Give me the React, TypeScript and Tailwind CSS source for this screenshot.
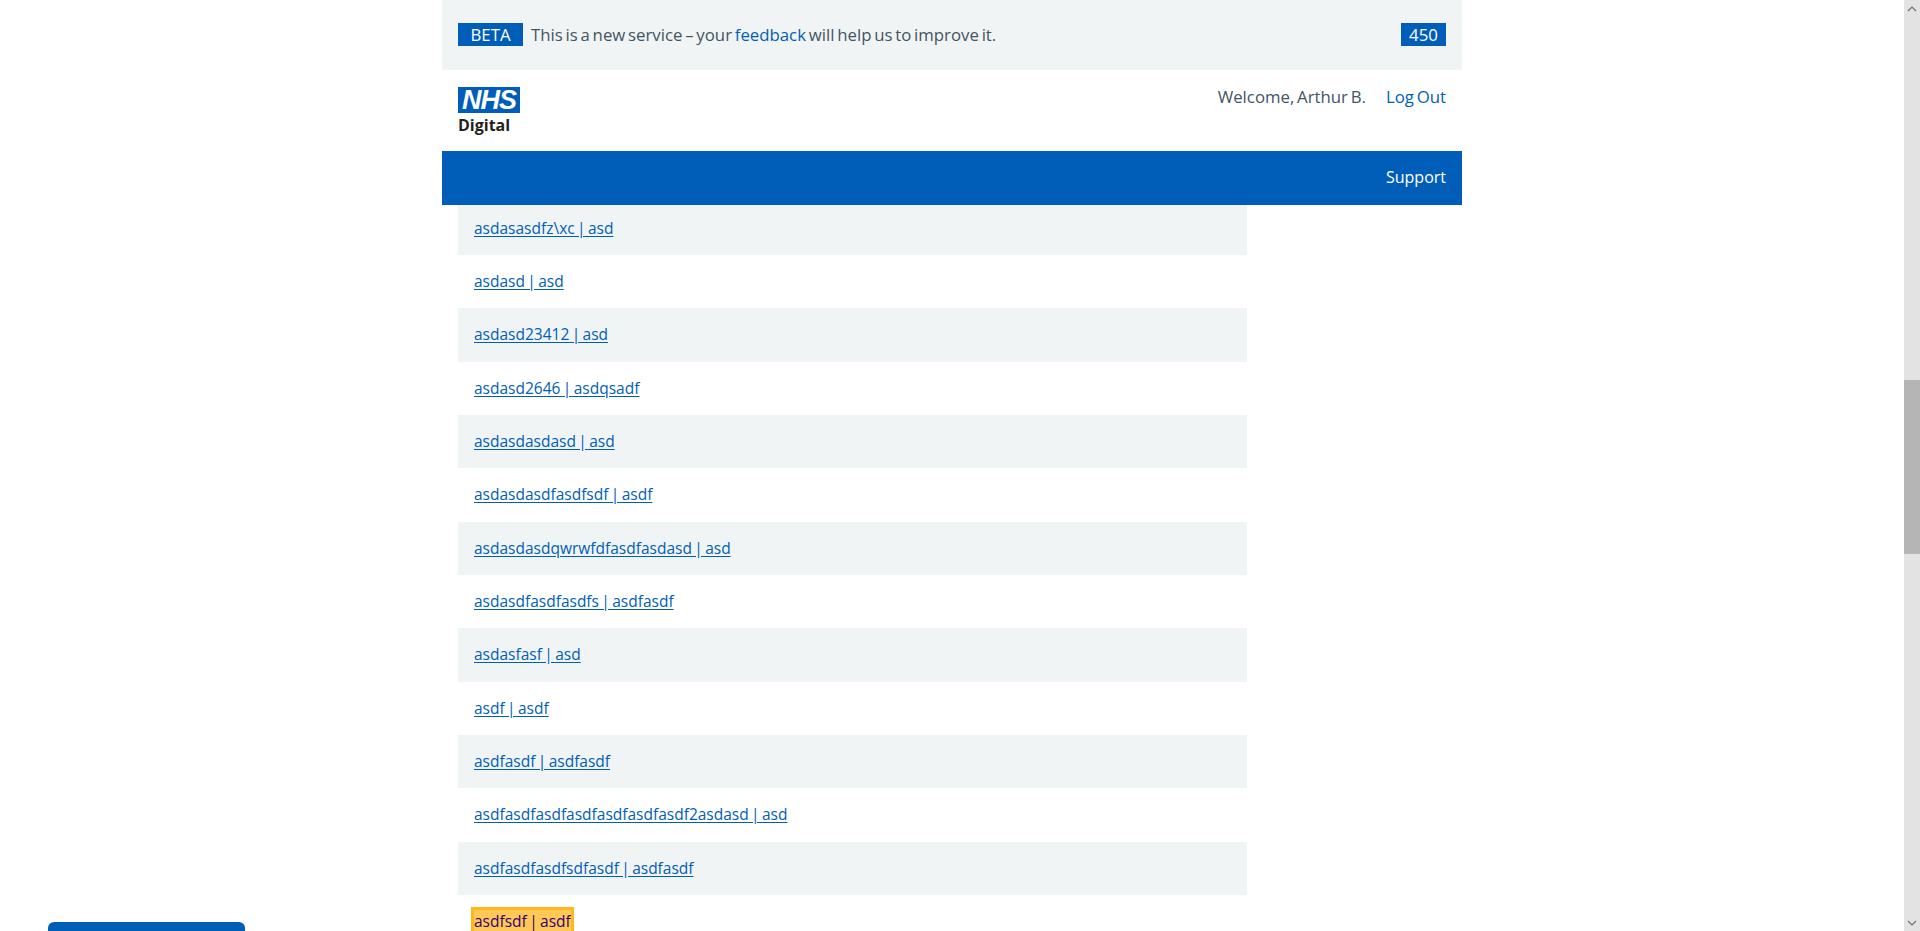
const rows = [
  "asdasasdfz\\xc | asd",
  "asdasd | asd",
  "asdasd23412 | asd",
  "asdasd2646 | asdqsadf",
  "asdasdasdasd | asd",
  "asdasdasdfasdfsdf | asdf",
  "asdasdasdqwrwfdfasdfasdasd | asd",
  "asdasdfasdfasdfs | asdfasdf",
  "asdasfasf | asd",
  "asdf | asdf",
  "asdfasdf | asdfasdf",
  "asdfasdfasdfasdfasdfasdfasdf2asdasd | asd",
  "asdfasdfasdfsdfasdf | asdfasdf",
];

const Logo = () => (
  <div className="w-[62px]">
    <div className="flex h-[26px] w-[62px] items-center justify-center bg-[#005eb8] font-['Liberation_Sans',sans-serif] text-[27px] font-bold italic leading-none tracking-[-1px] text-white">
      NHS
    </div>
    <div className="mt-[1px] text-[16px] font-bold leading-[22px] text-[#231f20] [word-spacing:0]">Digital</div>
  </div>
);

const Scrollbar = () => (
  <div className="flex h-full w-4 shrink-0 flex-col bg-[#e3e3e3]">
    <div className="flex h-[17px] items-center justify-center">
      <svg width="10" height="6" viewBox="0 0 10 6" fill="none" stroke="#707070" strokeWidth="1.2">
        <path d="M1 5l4-4 4 4" />
      </svg>
    </div>
    <div className="h-[363px]" />
    <div className="h-[174px] bg-[#b5b5b5]" />
    <div className="flex-1" />
    <div className="flex h-[17px] items-center justify-center">
      <svg width="10" height="6" viewBox="0 0 10 6" fill="none" stroke="#707070" strokeWidth="1.2">
        <path d="M1 1l4 4 4-4" />
      </svg>
    </div>
  </div>
);

export default function App() {
  return (
    <div className="relative flex h-[931px] overflow-hidden bg-white font-['Open_Sans',sans-serif] text-[16.8px] text-[#425563] [word-spacing:-1.6px]">
      <div className="min-w-0 flex-1">
        <div className="ml-[442px] w-[1020px]">
          <div className="relative z-10 flex h-[70px] items-center justify-between bg-[#f0f4f5] px-4 pb-[1px]">
            <div className="flex items-center gap-2">
              <span className="flex h-[23px] w-[65px] items-center justify-center bg-[#005eb8] text-white">BETA</span>
              <span>
                This is a new service – your <a className="text-[#005eb8]">feedback</a> will help us to improve it.
              </span>
            </div>
            <span className="flex h-[23px] w-[45px] items-center justify-center bg-[#005eb8] text-white">450</span>
          </div>

          <div className="relative z-10 flex h-[81px] items-start justify-between bg-white px-4 pt-[17px]">
            <Logo />
            <div className="-mt-[1px] flex gap-[20px] leading-[22px]">
              <span>Welcome, Arthur B.</span>
              <a className="text-[#005eb8]">Log Out</a>
            </div>
          </div>

          <div className="relative z-10 flex h-[54px] items-center justify-end bg-[#005eb8] px-4 pb-[2px] text-[16px] text-white">
            Support
          </div>

          <ul className="-mt-[3.33px] ml-4 w-[789px] text-[15.5px] [word-spacing:-1.65px]">
            {rows.map((row, i) => (
              <li key={row} className={`flex h-[53.33px] items-center px-4 ${i % 2 === 0 ? "bg-[#f0f4f5]" : ""}`}>
                <a className="text-[#005eb8] underline underline-offset-2">{row}</a>
              </li>
            ))}
            <li className="flex h-[53.33px] items-center px-4">
              <a className="bg-[#ffc857] text-[#330072] outline-[3px] outline-[#ffb81c]">asdfsdf | asdf</a>
            </li>
          </ul>
        </div>
      </div>

      <Scrollbar />

      <div className="absolute bottom-[-40px] left-[48px] z-20 h-[49px] w-[197px] rounded-md bg-[#005eb8]" />
    </div>
  );
}
